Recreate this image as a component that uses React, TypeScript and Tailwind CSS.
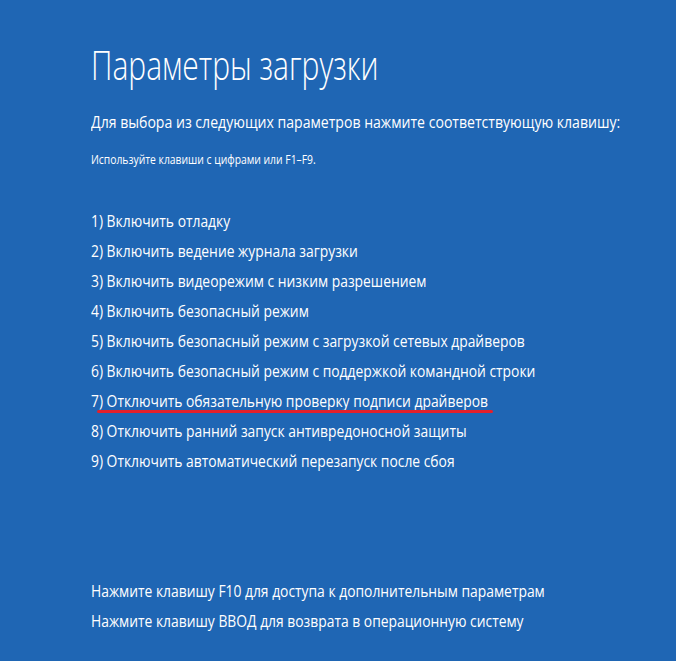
const items = [
  "1) Включить отладку",
  "2) Включить ведение журнала загрузки",
  "3) Включить видеорежим с низким разрешением",
  "4) Включить безопасный режим",
  "5) Включить безопасный режим с загрузкой сетевых драйверов",
  "6) Включить безопасный режим с поддержкой командной строки",
  "7) Отключить обязательную проверку подписи драйверов",
  "8) Отключить ранний запуск антивредоносной защиты",
  "9) Отключить автоматический перезапуск после сбоя",
];

const Line = ({ children }: { children: React.ReactNode }) => (
  <span className="inline-block origin-left scale-x-[0.815] whitespace-nowrap">{children}</span>
);

export default function App() {
  return (
    <div
      className="flex h-[661px] w-full flex-col overflow-hidden bg-[#1f66b4] pl-[91px] pb-[25px] text-white"
      style={{ fontFamily: '"Open Sans", "Noto Sans", sans-serif' }}
    >
      <h1 className="mt-[42px] h-[46px] whitespace-nowrap text-[40px] font-light leading-[46px]">
        <span className="inline-block origin-left scale-x-[0.75]">Параметры загрузки</span>
      </h1>

      <p className="mt-[21px] h-[26px] text-[17px] leading-[26px]">
        <span className="inline-block origin-left scale-x-[0.828] whitespace-nowrap">
          Для выбора из следующих параметров нажмите соответствующую клавишу:
        </span>
      </p>
      <p className="mt-[14px] h-[20px] text-[12.7px] leading-[20px]">
        <Line>Используйте клавиши с цифрами или F1–F9.</Line>
      </p>

      {/* список вариантов загрузки */}
      <ul className="mt-[37px] flex flex-col">
        {items.map((item, i) => (
          <li key={item} className="relative h-[30px] text-[17px] leading-[30px]">
            <Line>{item}</Line>
            {i === 6 && (
              <span className="absolute left-[6px] top-[24px] h-[3px] w-[396px] rounded-full bg-[#e5202b]" />
            )}
          </li>
        ))}
      </ul>

      <div className="mt-auto flex flex-col">
        <p className="h-[30px] text-[17px] leading-[30px]">
          <Line>Нажмите клавишу F10 для доступа к дополнительным параметрам</Line>
        </p>
        <p className="h-[30px] text-[17px] leading-[30px]">
          <Line>Нажмите клавишу ВВОД для возврата в операционную систему</Line>
        </p>
      </div>
    </div>
  );
}
